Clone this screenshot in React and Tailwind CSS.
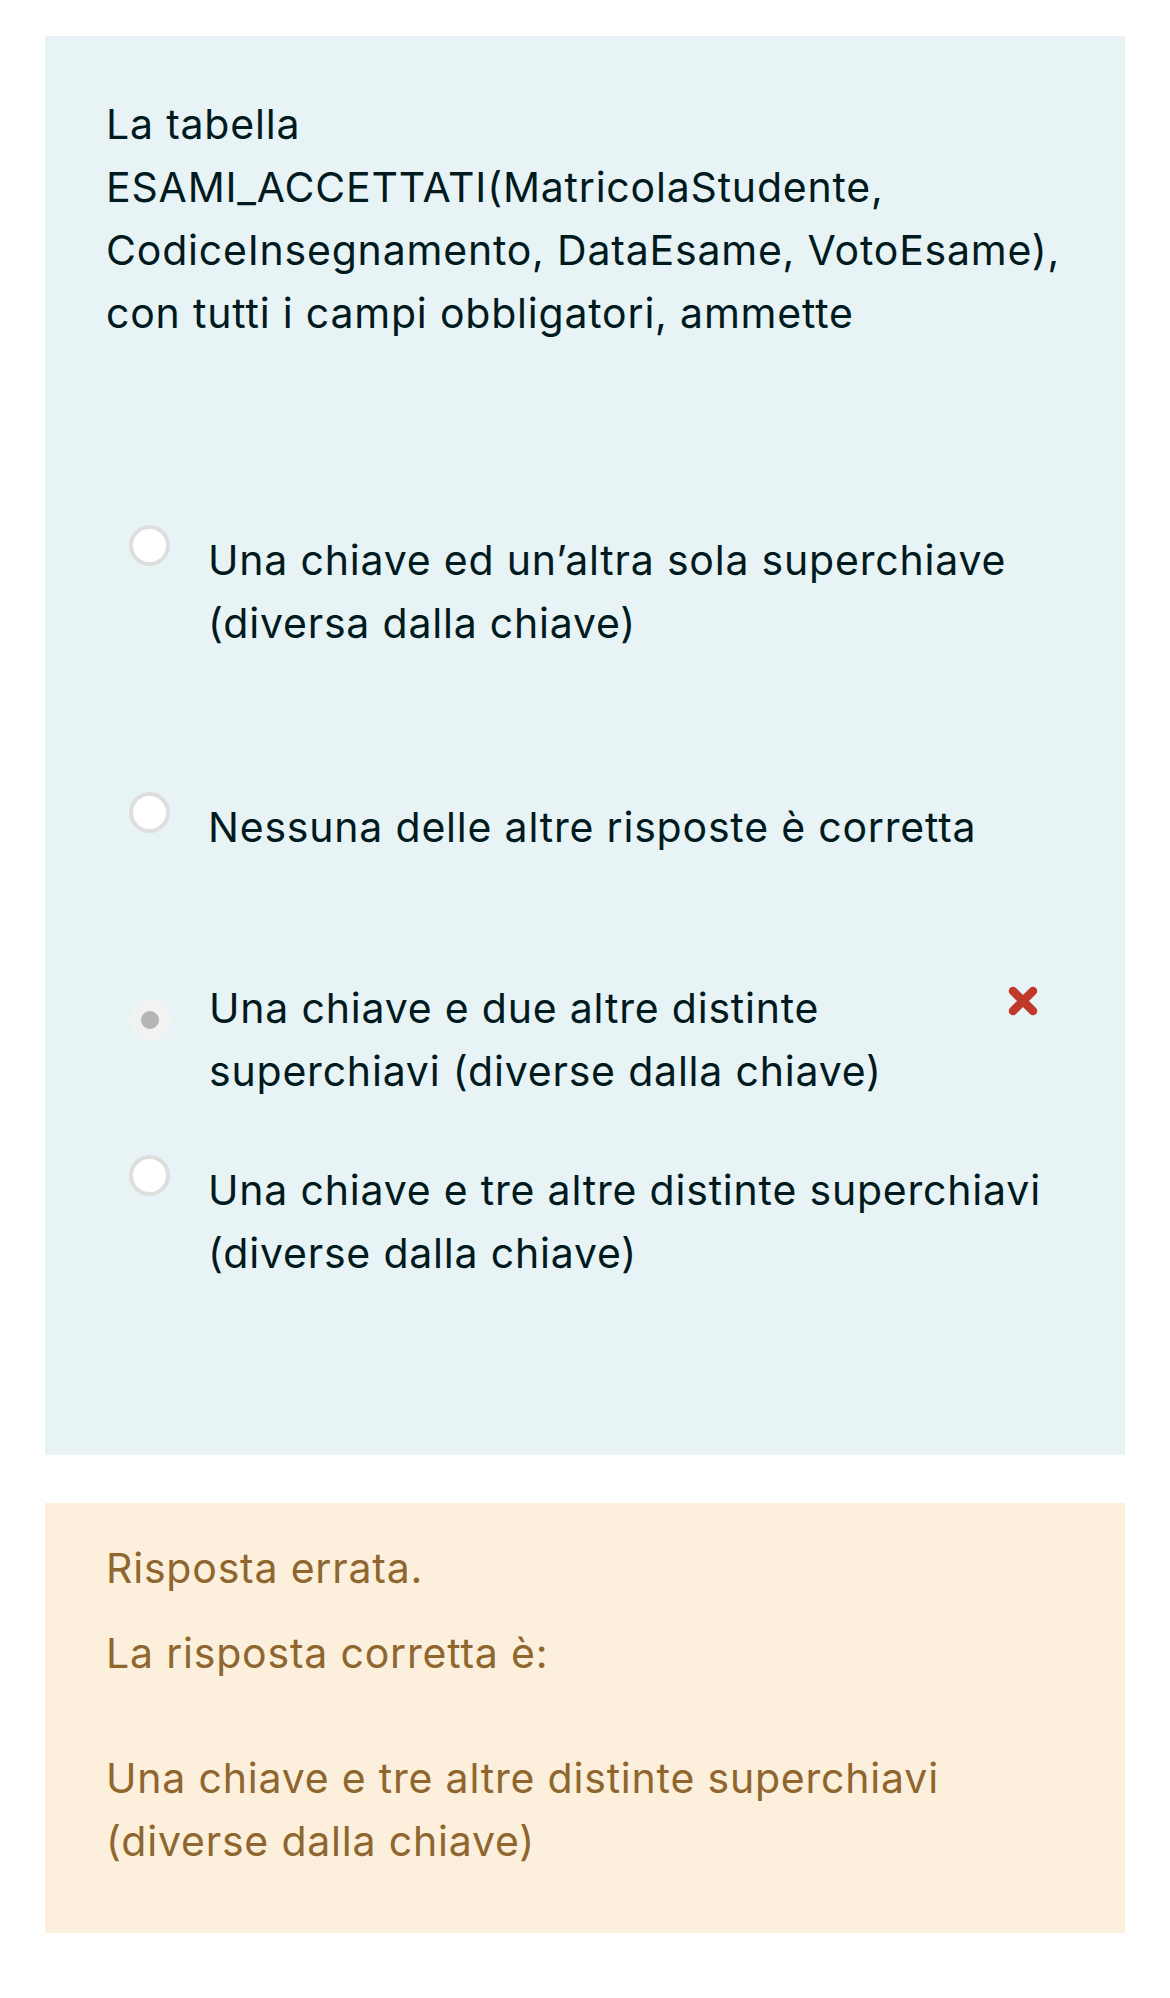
import React from 'react';

const options = [
  { id: 'a', text: 'Una chiave ed un’altra sola superchiave (diversa dalla chiave)', gap: 'mt-[184px]' },
  { id: 'b', text: 'Nessuna delle altre risposte è corretta', gap: 'mt-[141px]' },
  { id: 'c', text: 'Una chiave e due altre distinte superchiavi (diverse dalla chiave)', gap: 'mt-[118px]', checked: true, wrong: true },
  { id: 'd', text: 'Una chiave e tre altre distinte superchiavi (diverse dalla chiave)', gap: 'mt-[56px]' },
];

function Radio({ checked }) {
  if (checked) {
    return (
      <span className="mt-[22px] flex h-[42px] w-[42px] shrink-0 items-center justify-center rounded-full bg-[#f1f2f2]">
        <span className="h-[18px] w-[18px] rounded-full bg-[#b5b5b5]" />
      </span>
    );
  }
  return <span className="-mt-[4px] h-[41px] w-[41px] shrink-0 rounded-full border-[4px] border-[#dedede] bg-white" />;
}

function WrongMark() {
  return (
    <svg width="32" height="32" viewBox="0 0 32 32" className="ml-[8px] mt-[8px] shrink-0">
      <path d="M6 6 L26 26 M26 6 L6 26" stroke="#c0392b" strokeWidth="8.5" strokeLinecap="round" />
    </svg>
  );
}

export default function App() {
  return (
    <div className="min-h-[1998px] bg-white pt-[36px] font-['Inter','Noto_Sans',sans-serif] text-[41px] leading-[63px] tracking-[0.8px]">
      {/* Question */}
      <div className="mx-[45px] bg-[#e7f3f5] pl-[61px] pr-[40px] pt-[57px] pb-[170px] text-[#001a1e]">
        <p>
          La tabella
          <br />
          ESAMI_ACCETTATI(MatricolaStudente,
          <br />
          CodiceInsegnamento, DataEsame, VotoEsame),
          <br />
          con tutti i campi obbligatori, ammette
        </p>

        {options.map((o) => (
          <div key={o.id} className={`${o.gap} flex items-start pl-[23px]`}>
            <Radio checked={o.checked} />
            <div className="ml-[38px] flex flex-1 items-start">
              <p className={o.wrong ? 'w-[790px]' : 'flex-1'}>{o.text}</p>
              {o.wrong && <WrongMark />}
            </div>
          </div>
        ))}
      </div>

      {/* Feedback */}
      <div className="mx-[45px] mt-[48px] bg-[#fcefdc] pl-[61px] pr-[40px] pt-[34px] pb-[60px] text-[#8e662e]">
        <p>Risposta errata.</p>
        <p className="mt-[22px]">La risposta corretta è:</p>
        <p className="mt-[62px]">
          Una chiave e tre altre distinte superchiavi
          <br />
          (diverse dalla chiave)
        </p>
      </div>
    </div>
  );
}
